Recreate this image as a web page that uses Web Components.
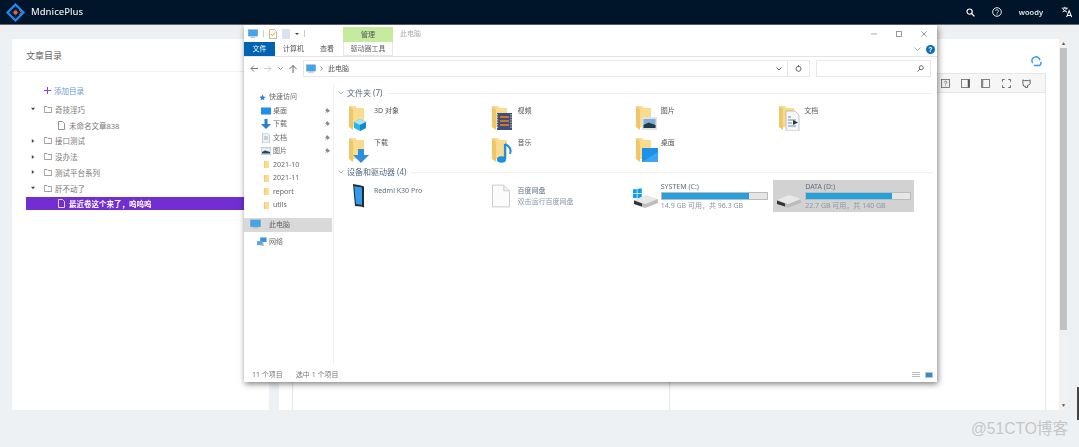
<!DOCTYPE html>
<html lang="zh-CN">
<head>
<meta charset="utf-8">
<title>MdnicePlus</title>
<style>
  html, body { margin: 0; padding: 0; height: 100%; overflow: hidden; }
  body {
    background: #eef1f4;
    font-family: "Noto Sans", "Noto Sans CJK SC", "Liberation Sans", sans-serif;
    color: #666;
  }
</style>
</head>
<body>
<app-page>
  <top-bar slot="top"></top-bar>

  <toc-panel slot="left">
    <toc-row kind="add" label="添加目录"></toc-row>
    <toc-row kind="open" label="奇技淫巧"></toc-row>
    <toc-row kind="doc" label="未命名文章838"></toc-row>
    <toc-row kind="closed" label="接口测试"></toc-row>
    <toc-row kind="closed" label="没办法"></toc-row>
    <toc-row kind="closed" label="测试平台系列"></toc-row>
    <toc-row kind="open" label="肝不动了"></toc-row>
    <toc-row kind="doc" selected label="最近卷这个来了，呜呜呜"></toc-row>
  </toc-panel>

  <editor-panel slot="right"></editor-panel>

  <explorer-window slot="over">
    <nav-item slot="nav" icon="star" head label="快速访问"></nav-item>
    <nav-item slot="nav" icon="desktop" pin label="桌面"></nav-item>
    <nav-item slot="nav" icon="down" pin label="下载"></nav-item>
    <nav-item slot="nav" icon="docs" pin label="文档"></nav-item>
    <nav-item slot="nav" icon="pics" pin label="图片"></nav-item>
    <nav-item slot="nav" icon="small-folder" label="2021-10"></nav-item>
    <nav-item slot="nav" icon="small-folder" label="2021-11"></nav-item>
    <nav-item slot="nav" icon="small-folder" label="report"></nav-item>
    <nav-item slot="nav" icon="small-folder" label="utils"></nav-item>
    <nav-item slot="nav" icon="pc" head active label="此电脑"></nav-item>
    <nav-item slot="nav" icon="network" head gap label="网络"></nav-item>

    <group-head slot="main" label="文件夹 (7)"></group-head>
    <item-grid slot="main">
      <folder-item badge="cube" label="3D 对象"></folder-item>
      <folder-item badge="film" label="视频"></folder-item>
      <folder-item badge="photo" label="图片"></folder-item>
      <folder-item badge="paper" label="文档"></folder-item>
      <folder-item badge="arrow" label="下载"></folder-item>
      <folder-item badge="note" label="音乐"></folder-item>
      <folder-item badge="screen" label="桌面"></folder-item>
    </item-grid>
    <group-head slot="main" label="设备和驱动器 (4)"></group-head>
    <item-grid slot="main" devices>
      <device-item icon="phone" label="Redmi K30 Pro"></device-item>
      <device-item icon="blank" label="百度网盘" sub="双击运行百度网盘"></device-item>
      <drive-item system label="SYSTEM (C:)" used="83" sub="14.9 GB 可用，共 96.3 GB"></drive-item>
      <drive-item selected label="DATA (D:)" used="83" sub="22.7 GB 可用，共 140 GB"></drive-item>
    </item-grid>
  </explorer-window>
</app-page>

<script>
const disk = `<path d="M1 14 L13 9 L25 13 L25 17 L12 22 L1 18z" fill="#e8e8e8"/><path d="M1 14 L12 18 L25 13 L25 17 L12 22 L1 18z" fill="#bdbdbd"/><path d="M1 14.5 L9 17.5 L9 20.5 L1 18z" fill="#333"/>`
const folderBack = `<path d="M0 1h6l2 2h7v19H0z" fill="#fbdc8e"/><path d="M0 1l4 3v21l-4-3z" fill="#eec76a"/>`

const icons = {
  star: '<svg viewBox="0 0 10 10"><path d="M5 .5l1.3 3 3.2.3-2.4 2.1.7 3.1L5 7.4 2.2 9l.7-3.1L.5 3.8l3.2-.3z" fill="#2f80d8"/></svg>',
  desktop: '<svg viewBox="0 0 10 10"><rect y="1.5" width="10" height="6.5" fill="#1e90e8"/><rect y="8" width="10" height="1" fill="#8cc4ee"/></svg>',
  down: '<svg viewBox="0 0 10 10"><path d="M3.5 0h3v5H10L5 10 0 5h3.5z" fill="#2a7fd0"/></svg>',
  docs: '<svg viewBox="0 0 10 10"><path d="M1.5 0h5l2 2v8h-7z" fill="#eef0f4" stroke="#a8b0bc" stroke-width=".6"/><path d="M3 4h4M3 6h4" stroke="#7d9cc4" stroke-width=".7"/></svg>',
  pics: '<svg viewBox="0 0 10 10"><rect y="1.5" width="10" height="7" fill="#e6ebf0" stroke="#9aa4ae" stroke-width=".5"/><path d="M1 6l3-1.500L9 6v1.500H1z" fill="#24435f"/></svg>',
  'small-folder': '<svg viewBox="0 0 7 10"><path d="M0 0h7v10H0z" fill="#fbdc8e"/><path d="M0 0h1.200v10H0z" fill="#f0c96a"/></svg>',
  pc: '<svg viewBox="0 0 12 11"><rect x=".5" y=".5" width="11" height="7.5" fill="#3ba7ee" stroke="#8b98a5" stroke-width=".6"/><rect x="3.5" y="8.5" width="5" height="1" fill="#a9b6c2"/><rect x="2.5" y="9.5" width="7" height="1" fill="#c6d0d8"/></svg>',
  network: '<svg viewBox="0 0 11 10"><rect x="3.5" y="0" width="7" height="5" fill="#3c94da"/><rect x="0" y="4" width="6" height="4.5" fill="#5aa8e4"/><path d="M5 8.5h3M6.500 5v4" stroke="#8a97a3" stroke-width=".8"/></svg>',
  logo: '<svg viewBox="0 0 20 20"><path d="M10 1.500L18.500 10 10 18.500 1.500 10z" fill="none" stroke="#1890ff" stroke-width="2.2"/><path d="M10 6l4 4-4 4-4-4z" fill="#23324a"/><circle cx="10" cy="10" r="2" fill="#e2683c"/><path d="M14 7.500l2 2.500-2 2.500" fill="none" stroke="#e2683c" stroke-width="1"/></svg>',
  search: '<svg viewBox="0 0 10 10"><circle cx="4" cy="4" r="2.900" fill="none" stroke="#fff" stroke-width="1.300"/><path d="M6.200 6.200L9.300 9.300" stroke="#fff" stroke-width="1.500"/></svg>',
  help: '<svg viewBox="0 0 10 10"><circle cx="5" cy="5" r="4.300" fill="none" stroke="#fff" stroke-width=".9"/><path d="M3.600 4a1.400 1.400 0 1 1 2.200 1.200C5.200 5.600 5 5.800 5 6.500" fill="none" stroke="#fff" stroke-width=".8"/><circle cx="5" cy="7.700" r=".5" fill="#fff"/></svg>',
  lang: '<svg viewBox="0 0 14 14"><path d="M1 2.500h7M4.500 1v1.500M2 6.500c2 0 4-2 4.500-4M2.500 3.500c.7 1.500 2.300 3 4.500 3.500" fill="none" stroke="#fff" stroke-width="1.100"/><path d="M6.500 13l3-7.500 3 7.500M7.500 11h4" fill="none" stroke="#fff" stroke-width="1.200"/></svg>',
  refresh: '<svg viewBox="0 0 14 14"><path d="M3 9.500A4.500 4.500 0 0 1 5.500 2.500 4.200 4.200 0 0 1 11.500 6" fill="none" stroke="#2f9ae0" stroke-width="1.700"/><path d="M12.500 8a3 3 0 0 1-2.500 4.300H4.500" fill="none" stroke="#2f9ae0" stroke-width="1.700"/></svg>',
  'b-help': '<svg viewBox="0 0 10 10"><rect x=".5" y=".5" width="9" height="9" fill="#eee" stroke="#666" stroke-width=".9"/><path d="M3.800 3.800a1.300 1.300 0 1 1 1.900 1.100C5.200 5.300 5 5.500 5 6.200" fill="none" stroke="#555" stroke-width=".8"/><circle cx="5" cy="7.600" r=".5" fill="#555"/></svg>',
  'b-right': '<svg viewBox="0 0 10 10"><rect x=".5" y=".5" width="9" height="9" fill="none" stroke="#666" stroke-width=".9"/><rect x="7.500" y=".5" width="2" height="9" fill="#555"/></svg>',
  'b-left': '<svg viewBox="0 0 10 10"><rect x=".5" y=".5" width="9" height="9" fill="none" stroke="#666" stroke-width=".9"/><rect x=".5" y=".5" width="2" height="9" fill="#888"/></svg>',
  'b-full': '<svg viewBox="0 0 10 10"><path d="M.5 3V.5H3M7 .5h2.500V3M9.500 7v2.500H7M3 9.500H.5V7" fill="none" stroke="#555" stroke-width="1"/></svg>',
  'b-git': '<svg viewBox="0 0 10 10"><path d="M1 1l1.700.8h4.600L9 1v4.500L7 7H6.200v2.500H3.800V8H2L1 5.500z" fill="none" stroke="#555" stroke-width="1"/></svg>',
  'w-pc': '<svg viewBox="0 0 11 10"><rect x=".3" y=".3" width="10.400" height="7" fill="#3ba7ee" stroke="#8b98a5" stroke-width=".5"/><rect x="3" y="8" width="5" height="1.500" fill="#b8c4ce"/></svg>',
  'q-doc': '<svg viewBox="0 0 8 10"><path d="M.5.500h5l2 2v7h-7z" fill="#fffdf6" stroke="#b0a070" stroke-width=".7"/><path d="M2 5l1.500 1.500L6 3.500" fill="none" stroke="#d9822b" stroke-width=".8"/></svg>',
  'q-doc2': '<svg viewBox="0 0 8 10"><rect width="8" height="10" fill="#d9e4f0"/></svg>',
  phone: '<svg viewBox="0 0 11 24"><path d="M0 0l8 1.500 3 1v21l-3-1L2 22z" fill="#2a2a2a"/><path d="M1.200 2.200l7.800 1.300v17.500L3 20z" fill="#2e9bf0"/></svg>',
  blank: '<svg viewBox="0 0 19 24"><path d="M.5.500h12l6 6v17H.5z" fill="#fbfbfb" stroke="#c9c9c9"/><path d="M12.500.500v6h6" fill="#eee" stroke="#c9c9c9"/></svg>'
}

const badges = {
  cube: '<path d="M5 17l6-3 6 3v6l-6 3-6-3z" fill="#29b6e8"/><path d="M5 17l6 3 6-3-6-3z" fill="#a8e6fa"/><path d="M11 20v6l6-3v-6z" fill="#1488c8"/>',
  film: '<rect x="5" y="8" width="15" height="17" fill="#3b5078"/><path d="M8 12h9M8 16h9M8 20h9" stroke="#d9702c" stroke-width="2.2"/><path d="M5.500 9v15M19 9v15" stroke="#bbb" stroke-width="1.2" stroke-dasharray="1.5 1"/>',
  photo: '<rect x="6" y="12" width="15" height="13" fill="#dfe3e6"/><rect x="7.500" y="14" width="12" height="9" fill="#7fb0d6"/><path d="M7.500 20l5-2.500 7 2.500v3h-12z" fill="#26384a"/>',
  paper: '<path d="M7 6h9l4 4v16H7z" fill="#f4f6f8" stroke="#9aa4ae" stroke-width=".6"/><path d="M9 12h3M9 15h8M9 18h4M9 21h8" stroke="#6d8eb8" stroke-width="1"/><path d="M14 15l5 2.500-5 2.500z" fill="#333"/>',
  arrow: '<path d="M9 12h6v6h5l-8 8-8-8h5z" fill="#2e8fdc"/>',
  note: '<path d="M13 7v15" stroke="#1d8fe6" stroke-width="2.2"/><ellipse cx="9.500" cy="22.500" rx="4.500" ry="3.300" fill="#1d8fe6"/><path d="M13 7c4 2 7 5 5 10" fill="none" stroke="#1d8fe6" stroke-width="2"/>',
  screen: '<rect x="6" y="11" width="16" height="14" fill="#1e90e8"/><path d="M6 25l16-10v10z" fill="#3ba5f2"/>'
}

class UiIcon extends HTMLElement {
  connectedCallback () {
    const size = this.getAttribute('size') || 10
    const h = this.getAttribute('h') || size
    this.attachShadow({ mode: 'open' }).innerHTML = `
      <style>
        :host { display: block; flex: none; width: ${size}px; height: ${h}px; }
        svg { display: block; width: 100%; height: 100%; }
      </style>
      ${icons[this.getAttribute('name')]}`
  }
}

class AppPage extends HTMLElement {
  constructor () {
    super()
    this.attachShadow({ mode: 'open' }).innerHTML = `
      <style>
        :host { display: block; position: relative; height: 447px; overflow: hidden; }
        .top { filter: blur(.35px); }
        .columns { display: flex; gap: 10px; height: 371px; padding: 14px 0 0 12px; filter: blur(.35px); }
        .scroll { flex: none; width: 9px; background: #f1f1f1; display: flex; flex-direction: column; margin-left: -10px; }
        .scroll b { height: 9px; color: #555; font: 5px/9px "Liberation Sans", sans-serif; text-align: center; }
        .scroll i { display: block; height: 282px; background: #c1c1c1; margin: 0 1px; }
        .scroll u { flex: 1; }
        .over { position: absolute; left: 244px; top: 25px; }
        .mark { position: absolute; left: 971px; top: 419px; font: 15.6px/20px "Liberation Sans", "Noto Sans CJK SC", sans-serif; color: #c6c6c6; white-space: nowrap; }
        .edge { position: absolute; right: 0; top: 387px; width: 2px; height: 33px; background: #444; }
      </style>
      <div class="top"><slot name="top"></slot></div>
      <div class="columns">
        <slot name="left"></slot>
        <slot name="right"></slot>
        <div class="scroll"><b>▲</b><i></i><u></u><b>▼</b></div>
      </div>
      <div class="over"><slot name="over"></slot></div>
      <div class="mark">@51CTO博客</div>
      <div class="edge"></div>`
  }
}

class TopBar extends HTMLElement {
  constructor () {
    super()
    this.attachShadow({ mode: 'open' }).innerHTML = `
      <style>
        :host { display: flex; align-items: center; height: 24px; border-bottom: 1px solid #666; background: #001529; color: #e8e8e8; }
        .logo { margin-left: 6px; }
        .name { margin-left: 6px; font-size: 9.5px; font-weight: 500; line-height: 24px; }
        .right { margin-left: auto; display: flex; align-items: center; }
        .user { font-size: 7.5px; font-weight: 600; margin: 0 18px 0 17px; }
        ui-icon[name="search"] { margin-right: 17px; }
        ui-icon[name="lang"] { margin-right: 6px; }
      </style>
      <ui-icon class="logo" name="logo" size="19"></ui-icon>
      <span class="name">MdnicePlus</span>
      <div class="right">
        <ui-icon name="search" size="9"></ui-icon>
        <ui-icon name="help" size="10"></ui-icon>
        <span class="user">woody</span>
        <ui-icon name="lang" size="12"></ui-icon>
      </div>`
  }
}

class TocPanel extends HTMLElement {
  constructor () {
    super()
    this.attachShadow({ mode: 'open' }).innerHTML = `
      <style>
        :host { display: block; flex: none; width: 257px; background: #fff; }
        h2 { margin: 0; height: 32px; border-bottom: 1px solid #f0f0f0; padding-left: 14px; font-size: 9px; font-weight: 400; line-height: 34px; color: #666; }
        .tree { padding: 13px 0 0 14px; display: flex; flex-direction: column; gap: 2.75px; }
      </style>
      <h2>文章目录</h2>
      <div class="tree"><slot></slot></div>`
  }
}

class TocRow extends HTMLElement {
  connectedCallback () {
    const kind = this.getAttribute('kind')
    const selected = this.hasAttribute('selected')
    const stroke = selected ? '#fff' : '#777'
    let lead = ''
    if (kind === 'add') {
      lead = '<span class="plus"></span>'
    } else if (kind === 'doc') {
      lead = `<svg class="doc" viewBox="0 0 7 9"><path d="M.5.500h4l2 2v6h-6z" fill="none" stroke="${stroke}" stroke-width=".8"/></svg>`
    } else {
      const caret = kind === 'open' ? 'M0 1h5L2.500 4z' : 'M1 0l3 2.500L1 5z'
      lead = `<svg class="caret" viewBox="0 0 5 5"><path d="${caret}" fill="#444"/></svg>
        <svg class="folder" viewBox="0 0 8 7"><path d="M.4.500h2.600l1 1h3.600v5H.4z" fill="none" stroke="#777" stroke-width=".7"/></svg>`
    }
    this.attachShadow({ mode: 'open' }).innerHTML = `
      <style>
        :host { display: flex; align-items: center; height: 13px; font-size: 7.5px; color: #777; white-space: nowrap; }
        :host([selected]) { background: #722ed1; color: #fff; font-weight: 700; }
        :host([kind="add"]) { padding-left: 18px; color: #6f9bd1; margin-top: -1px; margin-bottom: 3px; }
        :host([kind="doc"]) { padding-left: 32px; }
        :host([kind="open"]), :host([kind="closed"]) { padding-left: 5px; }
        .plus { width: 7px; height: 7px; margin-right: 3px; background: linear-gradient(#8b3fe0, #8b3fe0) center / 7px 1px no-repeat, linear-gradient(#8b3fe0, #8b3fe0) center / 1px 7px no-repeat; }
        .doc { width: 7px; height: 9px; margin-right: 4px; }
        .caret { width: 4px; height: 4px; margin-right: 9px; }
        .folder { width: 8px; height: 7px; margin-right: 3px; }
      </style>
      ${lead}<span>${this.getAttribute('label')}</span>`
  }
}

class EditorPanel extends HTMLElement {
  constructor () {
    super()
    this.attachShadow({ mode: 'open' }).innerHTML = `
      <style>
        :host { display: flex; flex-direction: column; flex: none; width: 780px; background: #fff; box-sizing: border-box; padding: 16px 13px 0 13px; }
        .status { display: flex; justify-content: flex-end; height: 18px; padding-right: 4px; }
        .box { flex: 1; display: flex; flex-direction: column; border: 1px solid #e6e6e6; border-bottom: 0; }
        .bar { display: flex; justify-content: flex-end; align-items: center; gap: 11.3px; height: 18px; background: #f6f6f6; border-bottom: 1px solid #e6e6e6; padding-right: 14px; }
        .panes { flex: 1; display: grid; grid-template-columns: 377px 1fr; }
        .panes div:first-child { border-right: 1px solid #e6e6e6; }
      </style>
      <div class="status"><ui-icon name="refresh" size="12"></ui-icon></div>
      <div class="box">
        <div class="bar">
          <ui-icon name="b-help" size="9"></ui-icon>
          <ui-icon name="b-right" size="9"></ui-icon>
          <ui-icon name="b-left" size="9"></ui-icon>
          <ui-icon name="b-full" size="9"></ui-icon>
          <ui-icon name="b-git" size="9"></ui-icon>
        </div>
        <div class="panes"><div></div><div></div></div>
      </div>`
  }
}

class ExplorerWindow extends HTMLElement {
  constructor () {
    super()
    this.attachShadow({ mode: 'open' }).innerHTML = `
      <style>
        :host { display: flex; flex-direction: column; width: 693px; height: 357px; background: #fff; box-shadow: 1px 2px 6px rgba(0, 0, 0, .5); font-size: 7px; color: #555; line-height: 12px; }
        .wrap { display: flex; flex-direction: column; height: 100%; filter: blur(.35px); }
        .title { display: flex; align-items: center; height: 17px; flex: none; }
        .quick { display: flex; align-items: center; width: 99px; padding-left: 4px; box-sizing: border-box; gap: 5px; }
        .sep { width: 1px; height: 7px; background: #ccc; }
        .drop { width: 0; height: 0; border: 2px solid transparent; border-top: 2.5px solid #444; border-bottom: 0; }
        .manage { align-self: flex-end; width: 50px; height: 15px; background: #c6eb9f; text-align: center; line-height: 15px; }
        .ttl { margin-left: 7px; color: #aaa; }
        .win { margin-left: auto; display: flex; gap: 19px; padding-right: 10px; align-items: center; }
        .win svg { display: block; width: 6px; height: 6px; }
        .tabs { display: flex; align-items: stretch; height: 14px; flex: none; border-bottom: 1px solid #e4e4e4; line-height: 14px; }
        .tabs span { display: block; }
        .file { width: 31px; background: #0063b1; color: #fff; text-align: center; }
        .t1 { margin-left: 8px; width: 37px; }
        .t2 { width: 23px; }
        .tool { width: 50px; text-align: center; box-sizing: border-box; border: 1px solid #e8e8e8; border-top: 0; background: #fff; height: 14px; color: #666; }
        .help { margin-left: auto; display: flex; align-items: center; gap: 5px; padding-right: 2px; }
        .help i { display: block; width: 9px; height: 9px; border-radius: 50%; background: #0f6cbd; color: #fff; font: 700 7px/9px "Liberation Sans", sans-serif; text-align: center; }
        .addr { display: flex; align-items: flex-start; height: 27px; flex: none; padding-top: 3px; box-sizing: border-box; }
        .nav-btns { display: flex; align-items: center; height: 17px; width: 59px; box-sizing: border-box; padding-left: 6px; gap: 6px; color: #888; }
        .path { display: flex; align-items: center; width: 507px; height: 17px; box-sizing: border-box; border: 1px solid #e8e8e8; padding-left: 2px; }
        .path span { margin-left: 5px; }
        .path .gt { margin-left: 4px; }
        .path .chev { margin-left: auto; }
        .path .rf { width: 21px; height: 100%; border-left: 1px solid #e8e8e8; margin-left: 5px; display: flex; align-items: center; justify-content: center; }
        .find { display: flex; align-items: center; justify-content: flex-end; width: 115px; height: 17px; box-sizing: border-box; border: 1px solid #e8e8e8; margin-left: 6px; padding-right: 6px; }
        .body { flex: 1; display: flex; min-height: 0; }
        .nav { flex: none; width: 90px; box-sizing: border-box; border-right: 1px solid #f0f0f0; padding-top: 6.5px; display: flex; flex-direction: column; }
        .main { flex: 1; padding: 2px 4px 0 4px; }
        .foot { display: flex; align-items: center; height: 17px; box-sizing: border-box; flex: none; padding: 3px 0 0 8px; color: #777; }
        .foot span:nth-child(2) { margin-left: 13px; }
        .views { margin-left: auto; display: flex; gap: 5px; padding-right: 4px; }
        .views i { display: block; width: 8px; height: 6px; }
      </style>
      <div class="wrap">
      <div class="title">
        <div class="quick">
          <ui-icon name="w-pc" size="10"></ui-icon>
          <span class="sep"></span>
          <ui-icon name="q-doc" size="8" h="10"></ui-icon>
          <ui-icon name="q-doc2" size="8" h="10"></ui-icon>
          <span class="drop"></span>
          <span class="sep"></span>
        </div>
        <div class="manage">管理</div>
        <div class="ttl">此电脑</div>
        <div class="win">
          <svg viewBox="0 0 6 6"><path d="M0 3h6" stroke="#aaa"/></svg>
          <svg viewBox="0 0 6 6"><rect x=".5" y=".5" width="5" height="5" fill="none" stroke="#999"/></svg>
          <svg viewBox="0 0 6 6"><path d="M.3.300l5.400 5.400M5.700.300l-5.400 5.400" stroke="#999"/></svg>
        </div>
      </div>
      <div class="tabs">
        <span class="file">文件</span>
        <span class="t1">计算机</span>
        <span class="t2">查看</span>
        <span class="tool">驱动器工具</span>
        <div class="help">
          <svg width="7" height="4" viewBox="0 0 7 4"><path d="M.5.500L3.500 3.500 6.500.500" fill="none" stroke="#aaa"/></svg>
          <i>?</i>
        </div>
      </div>
      <div class="addr">
        <div class="nav-btns">
          <svg width="8" height="7" viewBox="0 0 8 7"><path d="M4 .5L1 3.500 4 6.500M1 3.500h7" fill="none" stroke="#777"/></svg>
          <svg width="8" height="7" viewBox="0 0 8 7"><path d="M4 .5L7 3.500 4 6.500M7 3.500H0" fill="none" stroke="#ccc"/></svg>
          <svg width="5" height="3" viewBox="0 0 5 3"><path d="M.5.500l2 2 2-2" fill="none" stroke="#888"/></svg>
          <svg width="8" height="8" viewBox="0 0 8 8"><path d="M.5 4L4 .5 7.500 4M4 .5V8" fill="none" stroke="#666"/></svg>
        </div>
        <div class="path">
          <ui-icon name="pc" size="10"></ui-icon>
          <svg class="gt" width="3" height="5" viewBox="0 0 3 5"><path d="M.5.500l2 2-2 2" fill="none" stroke="#666" stroke-width=".8"/></svg>
          <span>此电脑</span>
          <svg class="chev" width="6" height="4" viewBox="0 0 6 4"><path d="M.5.500L3 3 5.500.500" fill="none" stroke="#666"/></svg>
          <div class="rf"><svg width="7" height="7" viewBox="0 0 7 7"><circle cx="3.500" cy="3.800" r="2.500" fill="none" stroke="#666"/><path d="M3.500 0v2" stroke="#666"/></svg></div>
        </div>
        <div class="find"><svg width="7" height="7" viewBox="0 0 7 7"><circle cx="4.300" cy="2.700" r="2" fill="none" stroke="#666"/><path d="M3 4L.5 6.500" stroke="#666"/></svg></div>
      </div>
      <div class="body">
        <div class="nav"><slot name="nav"></slot></div>
        <div class="main"><slot name="main"></slot></div>
      </div>
      <div class="foot">
        <span>11 个项目</span><span>选中 1 个项目</span>
        <div class="views">
          <i style="background: repeating-linear-gradient(#bbb 0 1px, #fff 1px 2px)"></i>
          <i style="background: #3b88c8; border: 1px solid #b5c8d8; box-sizing: border-box"></i>
        </div>
      </div>
      </div>`
  }
}

class NavItem extends HTMLElement {
  connectedCallback () {
    const icon = this.getAttribute('icon')
    let size = 10
    if (this.hasAttribute('active')) size = 11
    else if (icon === 'small-folder') size = 7
    else if (icon === 'star') size = 7
    this.attachShadow({ mode: 'open' }).innerHTML = `
      <style>
        :host { display: flex; align-items: center; height: 13.5px; padding-left: 17px; font-size: 7px; color: #666; white-space: nowrap; }
        :host([head]) { padding-left: 15px; }
        :host([active]) { height: 14px; margin-top: 5.5px; padding-left: 6px; background: #d9d9d9; margin-right: 1px; }
        :host([gap]) { margin-top: 3.5px; padding-left: 13px; }
        ui-icon { margin-right: 2px; }
        ui-icon[name="star"] { margin-right: 3px; }
        ui-icon[name="small-folder"] { margin: 0 3px 0 2px; }
        :host([active]) ui-icon { margin-right: 8px; }
        .pin { margin-left: auto; margin-right: 3px; width: 6px; height: 6px; }
      </style>
      <ui-icon name="${icon}" size="${size}"></ui-icon>
      <span>${this.getAttribute('label')}</span>
      ${this.hasAttribute('pin') ? '<svg class="pin" viewBox="0 0 6 6"><path d="M3 0l3 3-1 .5L3.500 5 3 3.500.5 6 2.500 3 1 2.500 2.500 1z" fill="#888"/></svg>' : ''}`
  }
}

class GroupHead extends HTMLElement {
  connectedCallback () {
    this.attachShadow({ mode: 'open' }).innerHTML = `
      <style>
        :host { display: flex; align-items: center; gap: 3px; height: 14px; font-size: 8px; color: #566a80; white-space: nowrap; }
        i { flex: 1; height: 1px; background: #eee; margin-left: 2px; }
      </style>
      <svg width="6" height="4" viewBox="0 0 6 4"><path d="M.5.500L3 3 5.500.500" fill="none" stroke="#8a99a8" stroke-width=".8"/></svg>
      <span>${this.getAttribute('label')}</span><i></i>`
  }
}

class ItemGrid extends HTMLElement {
  constructor () {
    super()
    this.attachShadow({ mode: 'open' }).innerHTML = `
      <style>
        :host { display: grid; grid-template-columns: repeat(4, 143.4px); grid-auto-rows: 32px; margin: 2px 0 -1px 11px; }
        :host([devices]) { margin-top: 1px; }
      </style>
      <slot></slot>`
  }
}

class FolderItem extends HTMLElement {
  connectedCallback () {
    this.attachShadow({ mode: 'open' }).innerHTML = `
      <style>
        :host { display: flex; padding: 3px 0 0 0; color: #555; font-size: 7px; line-height: 12px; }
        svg { flex: none; width: 22px; height: 26px; margin-right: 3px; }
      </style>
      <svg viewBox="0 0 22 26">${folderBack}${badges[this.getAttribute('badge')]}</svg>
      <span>${this.getAttribute('label')}</span>`
  }
}

class DeviceItem extends HTMLElement {
  connectedCallback () {
    const phone = this.getAttribute('icon') === 'phone'
    const sub = this.getAttribute('sub')
    this.attachShadow({ mode: 'open' }).innerHTML = `
      <style>
        :host { display: flex; padding-top: 4px; font-size: 7px; line-height: 11px; color: #5f6f80; white-space: nowrap; }
        ui-icon { margin-left: ${phone ? 4 : 0}px; margin-right: ${phone ? 10 : 7}px; }
        div { padding-top: 1px; }
        small { display: block; font-size: 7px; color: #8a97a5; line-height: 11px; }
      </style>
      <ui-icon name="${this.getAttribute('icon')}" size="${phone ? 11 : 18}" h="24"></ui-icon>
      <div>${this.getAttribute('label')}${sub ? `<small>${sub}</small>` : ''}</div>`
  }
}

class DriveItem extends HTMLElement {
  connectedCallback () {
    const win = this.hasAttribute('system') ? '<g transform="translate(0 3.500) scale(1.250)"><path d="M0 0l3-.4V3H0zM3.600-.5L7-1v4H3.600zM0 3.600h3V7L0 6.600zM3.600 3.600H7V7.600L3.600 7z" fill="#0a9bf0"/></g>' : ''
    this.attachShadow({ mode: 'open' }).innerHTML = `
      <style>
        :host { display: flex; font-size: 7px; line-height: 11px; color: #5f6f80; white-space: nowrap; box-sizing: border-box; width: 141px; height: 32px; margin-left: -3px; padding-top: 1px; }
        :host([selected]) { background: #d2d2d2; margin-left: -6px; padding-left: 3px; }
        svg { flex: none; width: 25px; height: 24px; margin-right: 3px; margin-top: 5px; overflow: visible; }
        :host([selected]) svg { margin-right: 4px; }
        .info { width: 107px; }
        :host([selected]) .info { width: 106px; }
        .bar { height: 8px; box-sizing: border-box; background: #e6e6e6; border: 1px solid #bcbcbc; }
        .bar i { display: block; height: 100%; background: #26a0da; }
        .sub { color: #8a97a5; }
      </style>
      <svg viewBox="0 0 25 24">${win}${disk}</svg>
      <div class="info">
        ${this.getAttribute('label')}
        <div class="bar"><i style="width: ${this.getAttribute('used')}%"></i></div>
        <div class="sub">${this.getAttribute('sub')}</div>
      </div>`
  }
}

customElements.define('ui-icon', UiIcon)
customElements.define('app-page', AppPage)
customElements.define('top-bar', TopBar)
customElements.define('toc-panel', TocPanel)
customElements.define('toc-row', TocRow)
customElements.define('editor-panel', EditorPanel)
customElements.define('explorer-window', ExplorerWindow)
customElements.define('nav-item', NavItem)
customElements.define('group-head', GroupHead)
customElements.define('item-grid', ItemGrid)
customElements.define('folder-item', FolderItem)
customElements.define('device-item', DeviceItem)
customElements.define('drive-item', DriveItem)
</script>
</body>
</html>
